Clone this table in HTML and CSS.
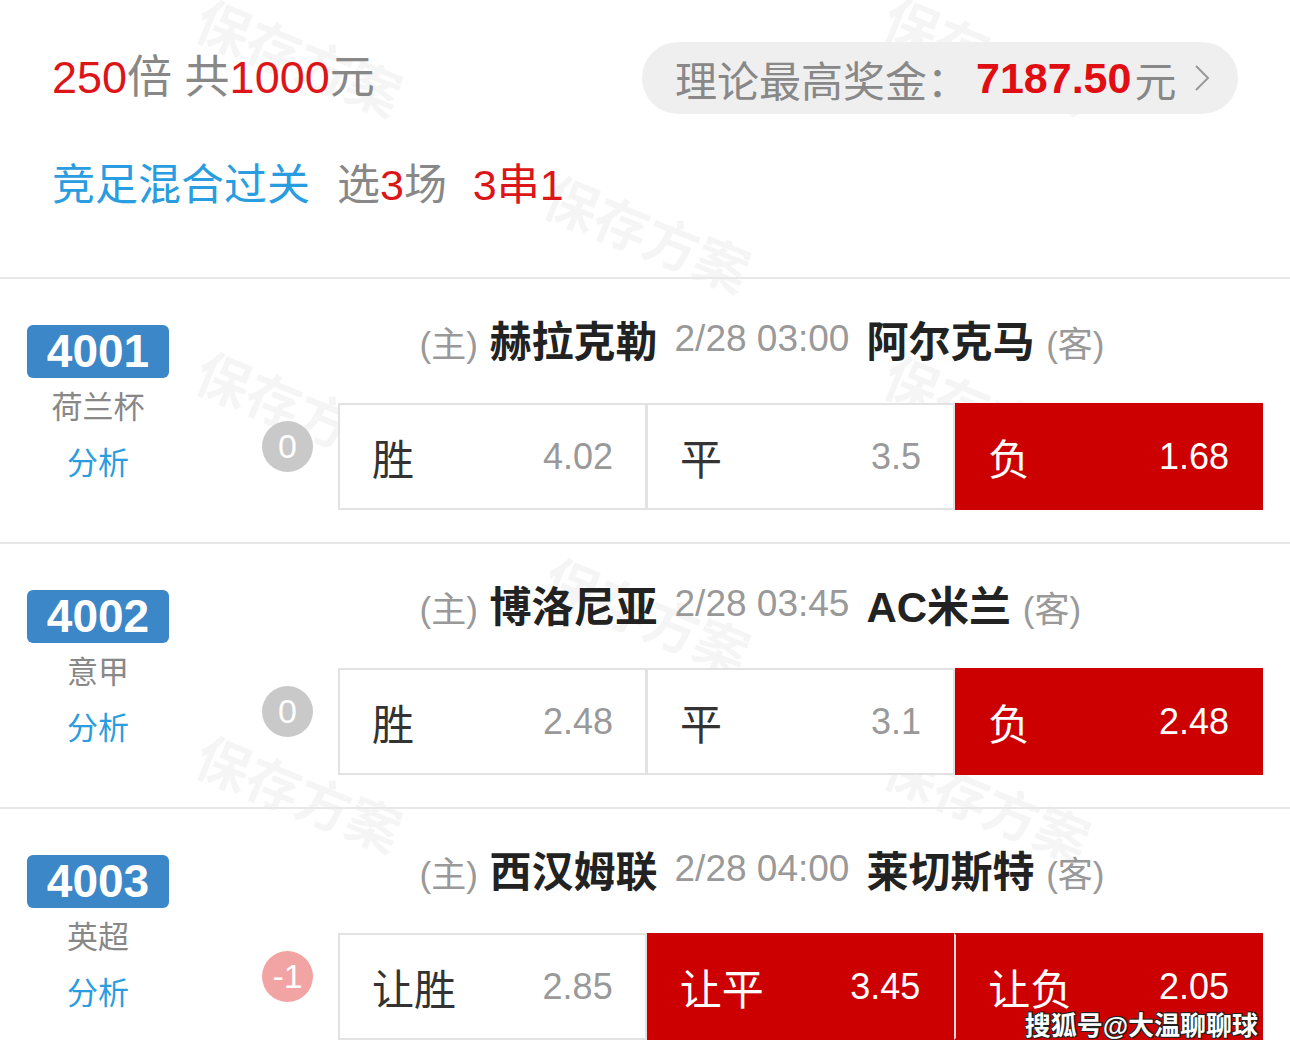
FILE: index.html
```html
<!DOCTYPE html>
<html lang="zh-CN">
<head>
  <meta charset="UTF-8" />
  <meta name="viewport" content="width=device-width, initial-scale=1" />
  <title>方案详情</title>
  <link rel="stylesheet" href="styles.css">
</head>
<body>
  <div class="page">
    <!-- 水印 -->
    <div class="watermarks">
      <span class="wm wm-a1">保存方案</span>
      <span class="wm wm-b1">保存方案</span>
      <span class="wm wm-c1">保存方案</span>
      <span class="wm wm-a2">保存方案</span>
      <span class="wm wm-c2">保存方案</span>
      <span class="wm wm-b2">保存方案</span>
      <span class="wm wm-a3">保存方案</span>
      <span class="wm wm-c3">保存方案</span>
    </div>

    <div class="summary">
      <div class="top-row">
        <div class="amount">
          <span class="red">250</span>倍 共<span class="red">1000</span>元
        </div>
        <div class="prize">
          理论最高奖金：<b class="prize-num">7187.50</b>元
          <svg class="chevron" width="16" height="28" viewBox="0 0 16 28">
            <path d="M2 2 L14 14 L2 26" fill="none" stroke="#999" stroke-width="2" />
          </svg>
        </div>
      </div>
      <div class="pass-line">
        <span class="blue">竞足混合过关</span>
        <span class="pick">选<span class="red">3</span>场</span>
        <span class="red combo">3串1</span>
      </div>
    </div>

    <div class="match">
      <div class="match-side">
        <div class="badge">4001</div>
        <div class="league">荷兰杯</div>
        <div class="analysis">分析</div>
      </div>
      <div class="match-body">
        <div class="teams">
          <div class="home"><span class="tag">(主)</span> <b>赫拉克勒</b></div>
          <div class="time">2/28 03:00</div>
          <div class="away"><b>阿尔克马</b> <span class="tag">(客)</span></div>
        </div>
        <div class="bet-row">
          <span class="handicap">0</span>
          <div class="odds">
            <div class="cell"><span class="label">胜</span><span class="rate">4.02</span></div>
            <div class="cell"><span class="label">平</span><span class="rate">3.5</span></div>
            <div class="cell selected"><span class="label">负</span><span class="rate">1.68</span></div>
          </div>
        </div>
      </div>
    </div>

    <div class="match">
      <div class="match-side">
        <div class="badge">4002</div>
        <div class="league">意甲</div>
        <div class="analysis">分析</div>
      </div>
      <div class="match-body">
        <div class="teams">
          <div class="home"><span class="tag">(主)</span> <b>博洛尼亚</b></div>
          <div class="time">2/28 03:45</div>
          <div class="away"><b>AC米兰</b> <span class="tag">(客)</span></div>
        </div>
        <div class="bet-row">
          <span class="handicap">0</span>
          <div class="odds">
            <div class="cell"><span class="label">胜</span><span class="rate">2.48</span></div>
            <div class="cell"><span class="label">平</span><span class="rate">3.1</span></div>
            <div class="cell selected"><span class="label">负</span><span class="rate">2.48</span></div>
          </div>
        </div>
      </div>
    </div>

    <div class="match">
      <div class="match-side">
        <div class="badge">4003</div>
        <div class="league">英超</div>
        <div class="analysis">分析</div>
      </div>
      <div class="match-body">
        <div class="teams">
          <div class="home"><span class="tag">(主)</span> <b>西汉姆联</b></div>
          <div class="time">2/28 04:00</div>
          <div class="away"><b>莱切斯特</b> <span class="tag">(客)</span></div>
        </div>
        <div class="bet-row">
          <span class="handicap minus">-1</span>
          <div class="odds">
            <div class="cell"><span class="label">让胜</span><span class="rate">2.85</span></div>
            <div class="cell selected"><span class="label">让平</span><span class="rate">3.45</span></div>
            <div class="cell selected"><span class="label">让负</span><span class="rate">2.05</span></div>
          </div>
        </div>
      </div>
    </div>

    <div class="credit">搜狐号@大温聊聊球</div>
  </div>
</body>
</html>
```

FILE: styles.css
```css
* {
  box-sizing: border-box;
}
body {
  margin: 0;
  background: #fff;
  font-family: "Liberation Sans", "Noto Sans CJK SC", sans-serif;
  color: #333;
}
.page {
  position: relative;
  width: 1290px;
  height: 1056px;
  overflow: hidden;
}
.red {
  color: #dc1518;
}
.blue {
  color: #2a9de0;
}

/* 水印 */
.watermarks {
  position: absolute;
  inset: 0;
  z-index: 0;
  pointer-events: none;
}
.wm {
  position: absolute;
  font-size: 54px;
  font-weight: 700;
  color: rgba(0, 0, 0, 0.04);
  transform: rotate(22deg);
  white-space: nowrap;
}
.wm-a1 { left: 192px; top: 16px; }
.wm-b1 { left: 540px; top: 192px; }
.wm-c1 { left: 880px; top: 14px; }
.wm-a2 { left: 192px; top: 368px; }
.wm-c2 { left: 880px; top: 372px; }
.wm-b2 { left: 540px; top: 574px; }
.wm-a3 { left: 192px; top: 752px; }
.wm-c3 { left: 880px; top: 762px; }

.summary,
.match,
.credit {
  position: relative;
  z-index: 1;
}

/* 顶部汇总 */
.summary {
  height: 279px;
  padding: 42px 52px 0;
  border-bottom: 2px solid #e8e8e8;
}
.top-row {
  display: flex;
  justify-content: space-between;
  align-items: center;
  height: 72px;
}
.amount {
  font-size: 45px;
  color: #888;
  line-height: 72px;
}
.prize {
  display: flex;
  align-items: center;
  width: 596px;
  height: 72px;
  padding: 0 0 0 33px;
  border-radius: 36px;
  background: #efefef;
  font-size: 42px;
  color: #888;
}
.prize-num {
  color: #e00d12;
  font-size: 43px;
  margin-left: 7px;
  margin-right: 3px;
}
.chevron {
  margin-left: 18px;
}
.pass-line {
  margin-top: 46px;
  font-size: 43px;
  line-height: 50px;
  color: #888;
}
.pick {
  margin-left: 15px;
}
.combo {
  margin-left: 14px;
}

/* 比赛行 */
.match {
  display: flex;
  height: 265px;
  border-bottom: 2px solid #e8e8e8;
}
.match-side {
  width: 196px;
  display: flex;
  flex-direction: column;
  align-items: center;
  padding-top: 46px;
}
.badge {
  width: 142px;
  height: 53px;
  border-radius: 6px;
  background: #3c87c7;
  color: #fff;
  font-size: 46px;
  font-weight: 700;
  line-height: 53px;
  text-align: center;
}
.league {
  margin-top: 10px;
  font-size: 31px;
  line-height: 40px;
  color: #888;
}
.analysis {
  margin-top: 16px;
  font-size: 31px;
  line-height: 40px;
  color: #2a9de0;
}
.match-body {
  flex: 1;
  padding-top: 29px;
}
.teams {
  display: grid;
  grid-template-columns: 1fr auto 1fr;
  column-gap: 17px;
  align-items: center;
  margin-left: 38px;
  height: 50px;
  font-size: 42px;
  color: #222;
  white-space: nowrap;
}
.home {
  text-align: right;
}
.away {
  text-align: left;
}
.tag {
  font-size: 35px;
  color: #999;
}
.time {
  font-size: 37px;
  color: #999;
}
.bet-row {
  display: flex;
  align-items: flex-start;
  margin-top: 45px;
  padding-left: 66px;
  padding-right: 27px;
}
.handicap {
  flex: none;
  width: 51px;
  height: 51px;
  margin-top: 18px;
  margin-right: 25px;
  border-radius: 50%;
  background: #c9c9c9;
  color: #fff;
  font-size: 34px;
  line-height: 51px;
  text-align: center;
}
.handicap.minus {
  background: #f2a3a3;
}
.odds {
  flex: 1;
  display: flex;
  height: 107px;
}
.cell {
  flex: 1;
  display: flex;
  justify-content: space-between;
  align-items: center;
  padding: 0 32px;
  background: #fff;
  border: 2px solid #e2e2e2;
}
.cell + .cell {
  border-left-width: 1px;
}
.label {
  font-size: 42px;
  color: #333;
}
.rate {
  font-size: 36px;
  color: #999;
}
.cell.selected {
  background: #cc0000;
  border-color: #cc0000;
}
.cell.selected + .cell.selected {
  border-left: 2px solid #f3d6d6;
}
.cell.selected .label,
.cell.selected .rate {
  color: #fff;
}

.credit {
  position: absolute;
  right: 32px;
  bottom: 14px;
  z-index: 2;
  font-size: 26px;
  font-weight: 700;
  color: #fff;
  text-shadow: -1px -1px 0 #222, 1px -1px 0 #222, -1px 1px 0 #222, 1px 1px 0 #222;
}
```
